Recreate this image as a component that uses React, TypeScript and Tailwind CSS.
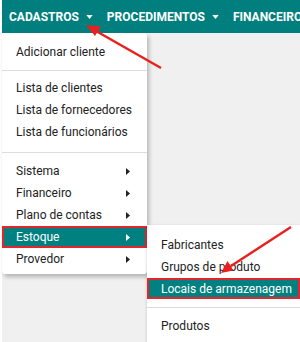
import React from 'react';

const Caret = () => (
  <svg className="w-[7px] h-[4px] ml-[7px]" viewBox="0 0 8 5" fill="currentColor">
    <path d="M0 0h8L4 5z" />
  </svg>
);

const RightTri = () => (
  <svg className="w-[4px] h-[7px]" viewBox="0 0 4 7" fill="currentColor">
    <path d="M0 0l4 3.5L0 7z" />
  </svg>
);

type Item = { label: string; sub?: boolean; active?: boolean; tight?: boolean };

const MenuItem = ({ label, sub, active, tight }: Item) => (
  <div
    className={
      active
        ? `${tight ? 'h-[21px]' : 'h-[22px]'} flex items-center justify-between pl-[12px] pr-[15px] bg-[#008080] text-white border-2 border-[#e3262b] whitespace-nowrap`
        : 'h-[22px] flex items-center justify-between pl-[14px] pr-[17px] text-[#222] whitespace-nowrap'
    }
  >
    <span>{label}</span>
    {sub && <RightTri />}
  </div>
);

export default function App() {
  return (
    <div className="w-[300px] h-[342px] bg-white relative overflow-hidden font-['Roboto',sans-serif]">
      <div className="ml-[2px] h-full bg-[#f0f0f0]">
        <nav className="h-[33px] bg-[#007f7e] flex items-center pl-[7px] text-white text-[12px] font-bold whitespace-nowrap">
          <span className="flex items-center">CADASTROS<Caret /></span>
          <span className="flex items-center ml-[14px]">PROCEDIMENTOS<Caret /></span>
          <span className="ml-[14px]">FINANCEIRO</span>
        </nav>
      </div>

      <div className="absolute left-[2px] top-[33px] w-[145px] bg-white rounded-b-[3px] rounded-tr-[3px] shadow-[2px_3px_4px_rgba(0,0,0,0.25)] pt-[8px] pb-[4px] text-[12px]">
        <MenuItem label="Adicionar cliente" />
        <div className="h-px bg-[#dcdcdc] mt-[7px] mb-[6px]" />
        <MenuItem label="Lista de clientes" />
        <MenuItem label="Lista de fornecedores" />
        <MenuItem label="Lista de funcionários" />
        <div className="h-px bg-[#dcdcdc] mt-[9px] mb-[7px]" />
        <MenuItem label="Sistema" sub />
        <MenuItem label="Financeiro" sub />
        <MenuItem label="Plano de contas" sub />
        <MenuItem label="Estoque" sub active />
        <MenuItem label="Provedor" sub />
      </div>

      <div className="absolute left-[147px] top-[225px] w-[153px] h-[130px] bg-white shadow-[0_1px_3px_rgba(0,0,0,0.2)] pt-[9px] text-[12px]">
        <MenuItem label="Fabricantes" />
        <MenuItem label="Grupos de produto" />
        <MenuItem label="Locais de armazenagem" active tight />
        <div className="h-px bg-[#dcdcdc] mt-[8px] mb-[7px]" />
        <MenuItem label="Produtos" />
      </div>

      <svg className="absolute inset-0 w-[300px] h-[342px] pointer-events-none" viewBox="0 0 300 342">
        <line x1="161" y1="68" x2="96" y2="31" stroke="#e8211f" strokeWidth="2.5" />
        <path d="M86 25l15 1.5-6 9.5z" fill="#e8211f" />
        <line x1="291" y1="227" x2="231" y2="266" stroke="#e8211f" strokeWidth="2.5" />
        <path d="M221 273l6.5-12 6 9.5z" fill="#e8211f" />
      </svg>
    </div>
  );
}
